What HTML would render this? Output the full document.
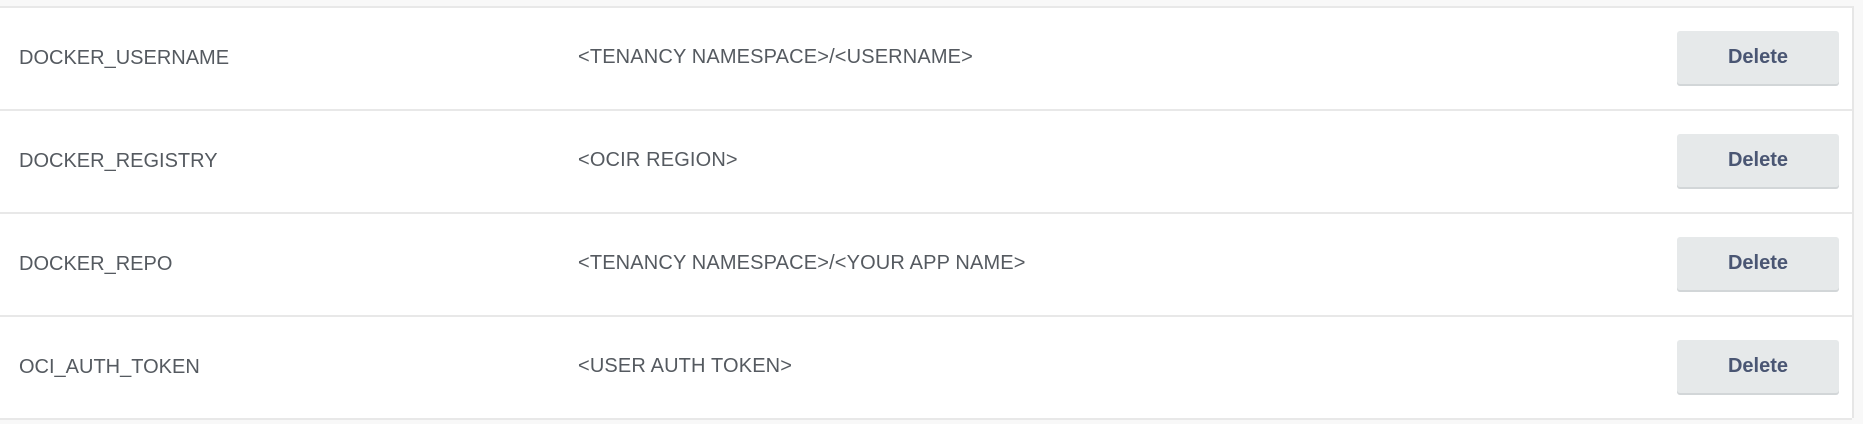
<!DOCTYPE html>
<html><head><style>
html,body{margin:0;padding:0;background:#f8f8f8;width:1863px;height:424px;overflow:hidden}
.wrap{position:absolute;left:0;top:6px;width:1854px;height:412px;background:#fff;border-right:2px solid #e6e6e6;border-top:2px solid #e8e8e8;box-sizing:border-box}
.row{position:relative;height:103px;border-bottom:2px solid #e8e8e8;box-sizing:border-box;font-family:"Liberation Sans",sans-serif;color:#555a60}
.k{position:absolute;left:19px;top:0;line-height:100px;font-size:20px}
.v{position:absolute;left:578px;top:0;line-height:99px;font-size:20px;letter-spacing:0.15px}
.b{position:absolute;left:1677px;top:23px;width:162px;height:53px;background:#e6e9ea;border-radius:3px;box-shadow:0 2px 0 #d2d6d8;color:#4a5673;font-weight:bold;font-size:20px;text-align:center;line-height:52px}
</style></head><body>
<div class="wrap">
<div class="row"><div class="k">DOCKER_USERNAME</div><div class="v">&lt;TENANCY NAMESPACE&gt;/&lt;USERNAME&gt;</div><div class="b">Delete</div></div>
<div class="row"><div class="k">DOCKER_REGISTRY</div><div class="v">&lt;OCIR REGION&gt;</div><div class="b">Delete</div></div>
<div class="row"><div class="k">DOCKER_REPO</div><div class="v">&lt;TENANCY NAMESPACE&gt;/&lt;YOUR APP NAME&gt;</div><div class="b">Delete</div></div>
<div class="row"><div class="k">OCI_AUTH_TOKEN</div><div class="v">&lt;USER AUTH TOKEN&gt;</div><div class="b">Delete</div></div>
</div>
</body></html>
